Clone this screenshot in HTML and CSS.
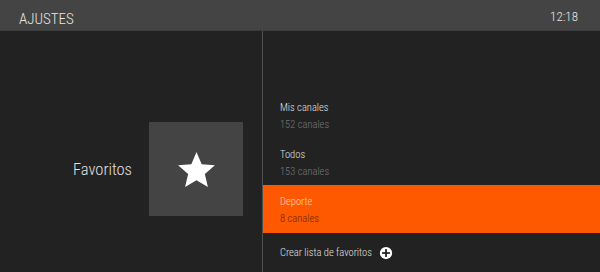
FILE: index.html
```html
<!DOCTYPE html>
<html lang="es">
<head>
<meta charset="utf-8">
<title>Ajustes</title>
<link rel="stylesheet" href="styles.css">
</head>
<body>
<div class="screen">
  <header class="topbar">
    <span class="title">AJUSTES</span>
    <span class="clock">12:18</span>
  </header>
  <main class="content">
    <section class="left">
      <span class="section-name">Favoritos</span>
      <div class="tile">
        <svg class="star" viewBox="2 2 20 19" width="37" height="35" aria-hidden="true">
          <path d="M12 17.27L18.18 21l-1.64-7.03L22 9.24l-7.19-.61L12 2 9.19 8.63 2 9.24l5.46 4.73L5.82 21z" fill="#ffffff"/>
        </svg>
      </div>
    </section>
    <section class="right">
      <div class="item">
        <div class="item-title">Mis canales</div>
        <div class="item-sub">152 canales</div>
      </div>
      <div class="item">
        <div class="item-title">Todos</div>
        <div class="item-sub">153 canales</div>
      </div>
      <div class="item selected">
        <div class="item-title">Deporte</div>
        <div class="item-sub">8 canales</div>
      </div>
      <div class="create">
        <span>Crear lista de favoritos</span>
        <svg class="plus" viewBox="0 0 16 16" width="14" height="14" aria-hidden="true">
          <circle cx="8" cy="8" r="7" fill="#ffffff"/>
          <rect x="7" y="3.5" width="2" height="9" fill="#222222"/>
          <rect x="3.5" y="7" width="9" height="2" fill="#222222"/>
        </svg>
      </div>
    </section>
  </main>
</div>
</body>
</html>
```
FILE: styles.css
```css
* { box-sizing: border-box; }
html, body { margin: 0; padding: 0; }
body {
  width: 600px;
  height: 272px;
  overflow: hidden;
  background: #222222;
  font-family: "Roboto Condensed", "Liberation Sans Narrow", Roboto, sans-serif;
  font-stretch: 85%;
  font-weight: 300;
  color: #e0e0e0;
}
.screen {
  display: flex;
  flex-direction: column;
  height: 272px;
}
.topbar {
  height: 31px;
  flex: 0 0 31px;
  background: #444444;
  border-bottom: 1px solid #3c3c3c;
  display: flex;
  justify-content: space-between;
  align-items: flex-start;
  padding: 0 22px 0 19px;
}
.title {
  font-size: 15px;
  line-height: 18px;
  padding-top: 10px;
  color: #e6e6e6;
}
.clock {
  font-size: 13px;
  line-height: 16px;
  padding-top: 9px;
  color: #e6e6e6;
}
.content {
  flex: 1;
  display: flex;
}
.left {
  width: 263px;
  flex: 0 0 263px;
  border-right: 1px solid #505050;
  display: flex;
  justify-content: flex-end;
  align-items: flex-start;
  gap: 17px;
  padding: 91px 19px 0 0;
}
.section-name {
  font-size: 16.5px;
  line-height: 20px;
  margin-top: 38px;
  color: #e0e0e0;
}
.tile {
  width: 94px;
  height: 94px;
  background: #444444;
  display: flex;
  align-items: center;
  justify-content: center;
}
.right {
  flex: 1;
  display: flex;
  flex-direction: column;
  padding-top: 60px;
}
.item {
  height: 47px;
  padding: 10px 0 0 17px;
}
.item-title {
  font-size: 10.5px;
  line-height: 14px;
  color: #e0e0e0;
}
.item-sub {
  font-size: 10.5px;
  line-height: 14px;
  margin-top: 3px;
  color: #777777;
}
.item.selected {
  background: #fe5900;
  height: 48px;
}
.item.selected .item-title { color: #ffd6bc; }
.item.selected .item-sub { color: #6e2600; }
.create {
  flex: 1;
  display: flex;
  align-items: center;
  gap: 7px;
  padding-left: 17px;
  font-size: 10.5px;
  line-height: 14px;
  color: #e0e0e0;
}
.plus { display: block; }
```
